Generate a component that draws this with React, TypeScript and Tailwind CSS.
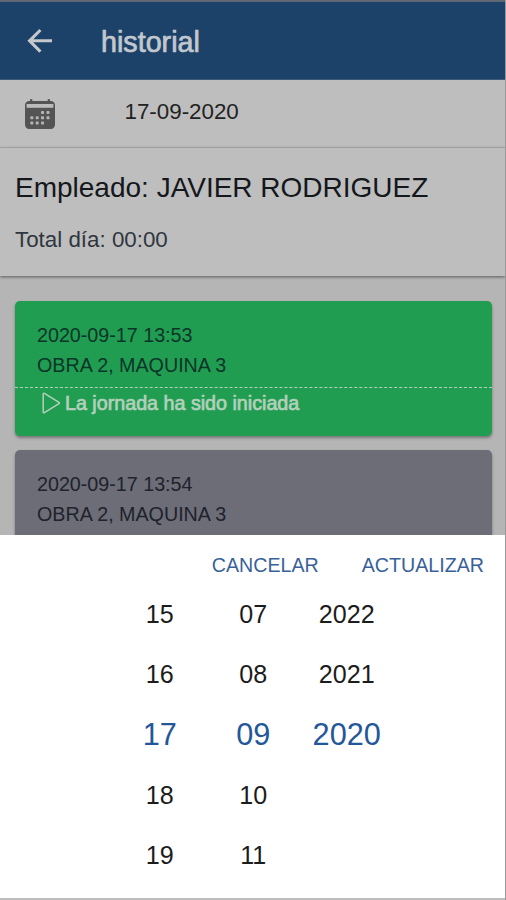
type Entry = {
  id: number;
  date: string;
  place: string;
  status?: string;
  cls: string;
};

const entries: Entry[] = [
  {
    id: 1,
    date: "2020-09-17 13:53",
    place: "OBRA 2, MAQUINA 3",
    status: "La jornada ha sido iniciada",
    cls: "h-[135px] bg-[#219d52] text-[#0a3528]",
  },
  {
    id: 2,
    date: "2020-09-17 13:54",
    place: "OBRA 2, MAQUINA 3",
    cls: "h-[135px] bg-[#6c6d76] text-[#20222d]",
  },
];

const columns = [
  { name: "day", values: ["15", "16", "17", "18", "19"] },
  { name: "month", values: ["07", "08", "09", "10", "11"] },
  { name: "year", values: ["2022", "2021", "2020", "", ""] },
];

const ArrowBack = () => (
  <svg width="26" height="26" viewBox="0 0 26 26" fill="none" stroke="#c6c8cc" strokeWidth="3.1">
    <path d="M13.4 2 2.6 12.8l10.8 10.8M3 12.8h22" />
  </svg>
);

const CalendarIcon = () => (
  <svg width="30" height="31" viewBox="0 0 30 31" className="mt-px">
    <path
      fill="#545454"
      d="M5 2V1.2a1 1 0 0 1 2.4 0V2h15.2v-.8a1 1 0 0 1 2.4 0V2h.8A4.2 4.2 0 0 1 30 6.2v19.6A4.2 4.2 0 0 1 25.8 30H4.2A4.2 4.2 0 0 1 0 25.8V6.2A4.2 4.2 0 0 1 4.2 2z"
    />
    <path fill="#bcbcbc" d="M1.6 5h26.8v3.800H1.6z" />
    <g fill="#b4b4b4">
      <rect x="16" y="12" width="3" height="3" rx=".8" />
      <rect x="21.5" y="12" width="3" height="3" rx=".8" />
      <rect x="5.3" y="17.3" width="3" height="3" rx=".8" />
      <rect x="10.7" y="17.3" width="3" height="3" rx=".8" />
      <rect x="16" y="17.3" width="3" height="3" rx=".8" />
      <rect x="21.5" y="17.3" width="3" height="3" rx=".8" />
      <rect x="5.3" y="22.6" width="3" height="3" rx=".8" />
      <rect x="10.7" y="22.6" width="3" height="3" rx=".8" />
      <rect x="16" y="22.6" width="3" height="3" rx=".8" />
    </g>
  </svg>
);

const PlayIcon = () => (
  <svg width="19" height="22" viewBox="0 0 19 22" fill="none" stroke="#b3d0bb" strokeWidth="1.5" strokeLinejoin="round">
    <path d="M1.2 2v18a.8.8 0 0 0 1.2.7L17 11.7a.8.8 0 0 0 0-1.4L2.4 1.3A.8.8 0 0 0 1.2 2z" />
  </svg>
);

function EntryCard({ entry }: { entry: Entry }) {
  return (
    <div className={`shrink-0 rounded-[5px] shadow-[0_2px_3px_rgba(0,0,0,0.35)] ${entry.cls}`}>
      <div className="h-[86px] pt-[19px] pl-[22px] text-[19.7px] leading-[30px]">
        <p>{entry.date}</p>
        <p>{entry.place}</p>
      </div>
      {entry.status && (
        <div className="flex h-[31px] items-center border-t border-dashed border-[#b3d0bb] pl-[27px] text-[#b3d0bb]">
          <PlayIcon />
          <span className="mt-px ml-1 text-[19.7px] [-webkit-text-stroke:0.7px]">{entry.status}</span>
        </div>
      )}
    </div>
  );
}

export default function App() {
  return (
    <div className="flex h-[900px] w-[506px] flex-col overflow-hidden border-r border-[#999] bg-[#b5b5b5] font-['Liberation_Sans',Arial,sans-serif] whitespace-nowrap">
      {/* Header */}
      <header className="flex h-20 shrink-0 items-center border-t-2 border-b border-t-[#5f6874] border-b-[#3b5a7c] bg-[#1d4269] pl-[27px]">
        <ArrowBack />
        <h1 className="mt-1 ml-12 text-[28.7px] text-[#c3c7ce] [-webkit-text-stroke:0.7px]">historial</h1>
      </header>

      {/* Selected date */}
      <div className="flex h-[68px] shrink-0 items-center border-b border-[#adadad] bg-[#bebebe] pl-[25px]">
        <CalendarIcon />
        <span className="mb-1 ml-[69.5px] text-[22.35px] text-[#222]">17-09-2020</span>
      </div>

      {/* Employee summary */}
      <section className="z-10 h-[128px] shrink-0 bg-[#bebebe] pt-[22px] pl-[15px] shadow-[0_1px_3px_rgba(0,0,0,0.5)]">
        <h2 className="text-[28px] leading-9 text-[#14171c]">Empleado: JAVIER RODRIGUEZ</h2>
        <p className="mt-[19px] text-[22.35px] leading-[30px] text-[#30363e]">Total día: 00:00</p>
      </section>

      {/* Entries */}
      <main className="flex h-[259px] shrink-0 flex-col gap-3.5 overflow-hidden pt-[25px] pr-[13px] pl-[15px]">
        {entries.map((entry) => (
          <EntryCard key={entry.id} entry={entry} />
        ))}
      </main>

      {/* Date picker */}
      <div className="flex-1 border-b-2 border-[#bdbdbd] bg-white">
        <div className="flex h-[49px] items-center justify-end gap-[43px] pt-3 pr-[21px] text-[19.65px] text-[#386199]">
          <button type="button">CANCELAR</button>
          <button type="button">ACTUALIZAR</button>
        </div>
        <div className="ml-[113px] flex text-center">
          {columns.map((col) => (
            <ul key={col.name} className="w-[93.5px]">
              {col.values.map((value, i) => (
                <li
                  key={i}
                  className={
                    i === 2
                      ? "h-[60.3px] text-[30.7px] leading-[60.3px] text-[#24579a]"
                      : "h-[60.3px] text-[25.1px] leading-[60.3px] text-[#1c1c1c]"
                  }
                >
                  {value}
                </li>
              ))}
            </ul>
          ))}
        </div>
      </div>
    </div>
  );
}
